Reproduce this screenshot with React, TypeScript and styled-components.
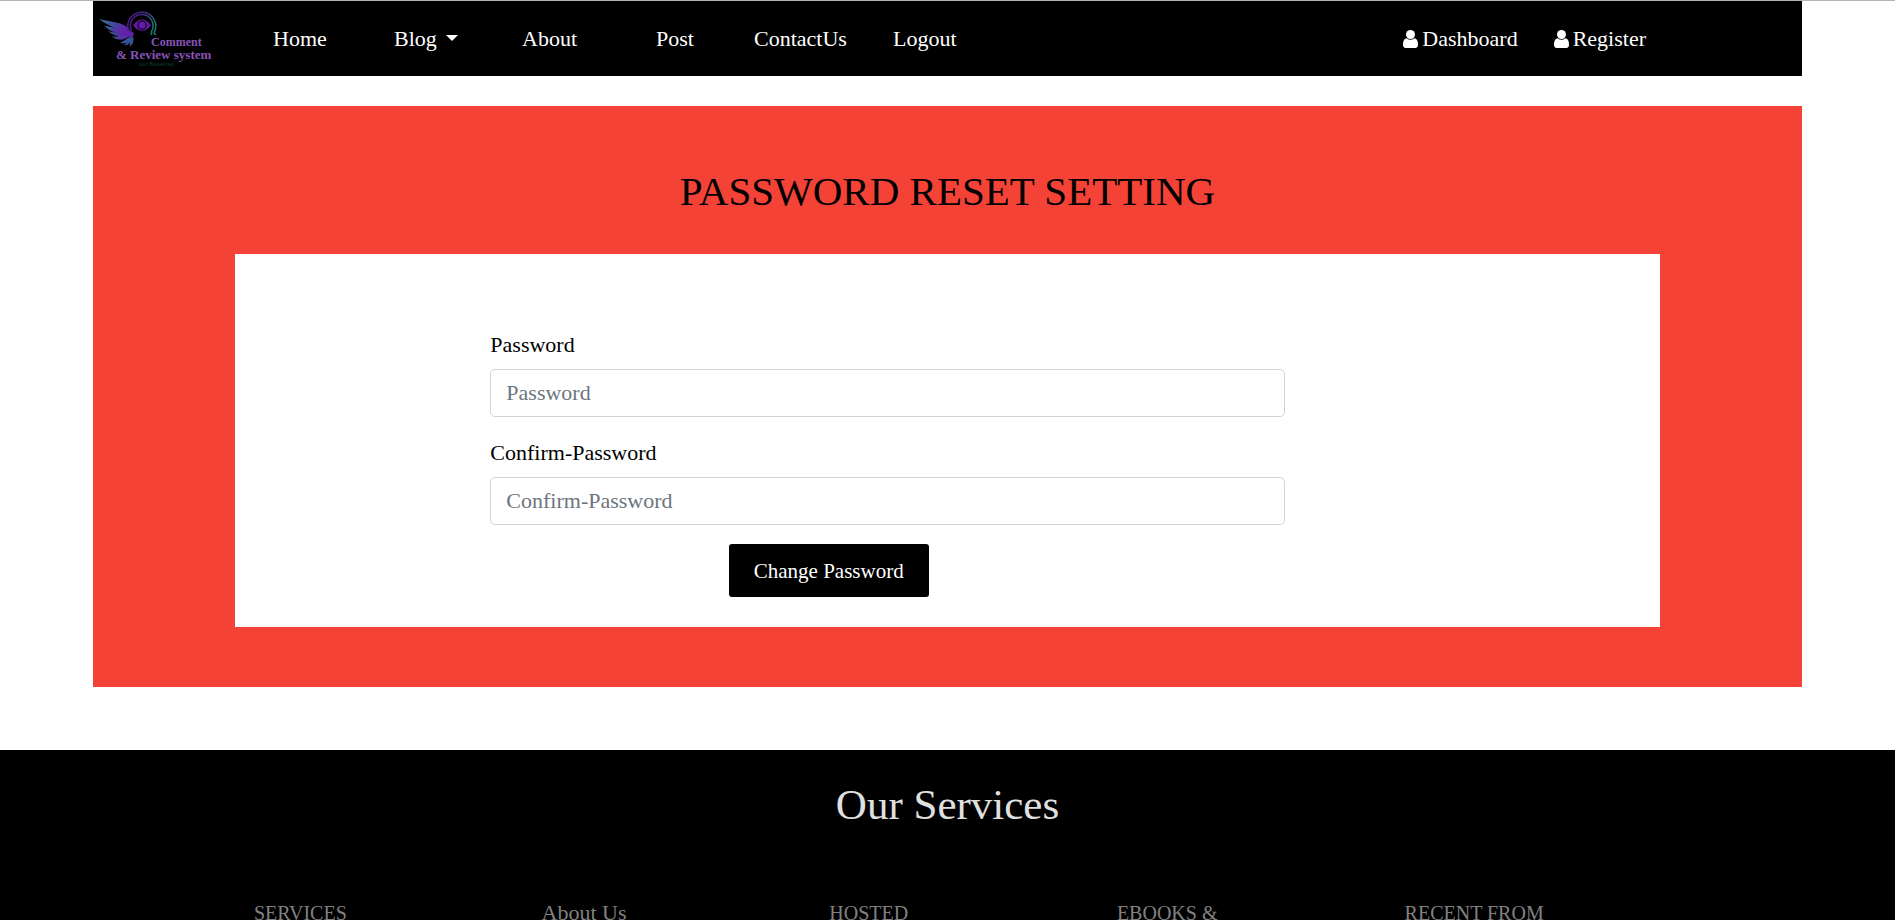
import React from "react";
import styled, { createGlobalStyle } from "styled-components";

const GlobalStyle = createGlobalStyle`
  *, *::before, *::after { box-sizing: border-box; }
  body {
    margin: 0;
    background: #fff;
    color: #000;
    font-family: "Palatino Linotype", "Book Antiqua", "Liberation Serif", serif;
    font-size: 22px;
    line-height: 30px;
  }
`;

const Page = styled.div`
  border-top: 1px solid #b4b4b4;
`;

const Container = styled.div`
  margin: 0 93px;
`;

const Navbar = styled.nav`
  display: flex;
  align-items: center;
  height: 75px;
  background: #000;
`;

const Brand = styled.a`
  display: block;
  flex: none;
  width: 180px;
  height: 75px;
`;

const NavList = styled.ul`
  display: grid;
  grid-template-columns: 121px 128px 134px 98px 139px auto;
  margin: 0;
  padding: 0;
  list-style: none;
`;

const AccountList = styled.ul`
  display: flex;
  gap: 36px;
  margin: 0 156px 0 auto;
  padding: 0;
  list-style: none;
`;

const NavLink = styled.a`
  display: flex;
  align-items: center;
  gap: 4px;
  color: #fff;
  text-decoration: none;
`;

const Caret = styled.span`
  margin: 0 0 2px 5px;
  border-top: 6px solid #fff;
  border-right: 6px solid transparent;
  border-left: 6px solid transparent;
`;

const ResetSection = styled.main`
  margin-top: 30px;
  padding: 61px 0 60px;
  background: #f44336;
`;

const Heading = styled.h1`
  margin: 0 0 39px;
  font-size: 41px;
  font-weight: 400;
  line-height: 48px;
  text-align: center;
`;

const Panel = styled.div`
  width: calc(100% * 10 / 12);
  margin: 0 auto;
  padding: 76px 0 30px;
  background: #fff;
`;

const Form = styled.form`
  margin: 0 26.3% 0 17.9%;
`;

const Field = styled.div`
  margin-bottom: 21px;
  &:last-of-type { margin-bottom: 19px; }
`;

const Label = styled.label`
  display: block;
  width: fit-content;
  margin-bottom: 9px;
`;

const Input = styled.input`
  display: block;
  width: 100%;
  height: 48px;
  padding: 0 15px;
  border: 1px solid #ced4da;
  border-radius: 5px;
  background: #fff;
  color: #495057;
  font: inherit;
  &::placeholder { color: #6c757d; opacity: 1; }
`;

const SubmitButton = styled.button`
  display: block;
  height: 53px;
  margin-left: 30%;
  padding: 0 25px;
  border: 0;
  border-radius: 3px;
  background: #000;
  color: #fff;
  font: inherit;
  font-size: 21px;
`;

const Footer = styled.footer`
  margin-top: 63px;
  padding-top: 31px;
  background: #000;
`;

const FooterHeading = styled.h2`
  margin: 0 0 69px;
  color: #e0e0e0;
  font-size: 43px;
  font-weight: 400;
  line-height: 48px;
  text-align: center;
`;

const FooterColumns = styled.div`
  display: grid;
  grid-template-columns: repeat(5, 1fr);
  padding: 0 10.7% 0 13.4%;
`;

const ColumnTitle = styled.h3<{ $caps?: boolean }>`
  margin: 0;
  color: #808080;
  font-size: ${(p) => (p.$caps ? 20 : 22)}px;
  font-weight: 400;
  line-height: 30px;
`;

const Logo = () => (
  <svg width="147" height="75" viewBox="0 0 147 75" role="img" aria-label="Comment & Review system">
    <defs>
      <linearGradient id="wing" x1="0" y1="0" x2="1" y2="0.6">
        <stop offset="0" stopColor="#2a7f86" />
        <stop offset="0.5" stopColor="#47409e" />
        <stop offset="0.85" stopColor="#6320a8" />
      </linearGradient>
      <linearGradient id="ring" x1="0" y1="0" x2="1" y2="0.5">
        <stop offset="0.2" stopColor="#4b1c8c" />
        <stop offset="0.6" stopColor="#3d3a80" />
        <stop offset="1" stopColor="#1b7a6b" />
      </linearGradient>
    </defs>
    <g fill="url(#wing)">
      <path d="M6.500 18C17 21 31 21 36 28C38 31 40 31 41 32C40 38 36 37 33 33.500C25 27 14 25 6.500 18Z" />
      <path d="M11 24.500C18 26.500 28 26 34 33.500C26 33.500 17 31 11 24.500Z" />
      <path d="M15 30C22 32.500 28 30.500 35 34.500C28 37 20 35 15 30Z" />
      <path d="M19 35.500C26 36.500 30 33.500 36 35C31 40 25 40 19 35.500Z" />
    </g>
    <g fill="#35559a">
      <path d="M27 41.500C31 41 33 37 38 35.500C37 40 32 44.500 27 41.500Z" />
      <path d="M31 44.500C34 42 35 38 39 36C39 40 36 44.500 31 44.500Z" />
      <path d="M37 45.500C36 41 38 38 40 35C41 39 40.500 43 37 45.500Z" />
    </g>
    <g fill="none" stroke="url(#ring)" strokeWidth="1.500">
      <path d="M36 31A14 14 0 1 1 61 32L63 34" />
      <path d="M38.500 29.500A11.300 11.300 0 1 1 58.500 30.500V34" />
    </g>
    <path d="M40 24.200Q49 13 58 24.200Q49 35.500 40 24.200Z" fill="#641aa8" />
    <circle cx="49" cy="24.200" r="4.600" fill="#000" />
    <circle cx="49" cy="24.200" r="3.600" fill="#641aa8" />
    <text x="46" y="65" fill="#0d3f3c" fontFamily="Liberation Sans, sans-serif" fontSize="6">our Baseline)</text>
    <text x="58" y="45" fill="#8653b8" fontFamily="Liberation Serif, serif" fontSize="12" fontWeight="700">Comment</text>
    <text x="23" y="58" fill="#8653b8" fontFamily="Liberation Serif, serif" fontSize="13" fontWeight="700">&amp; Review system</text>
  </svg>
);

const UserIcon = () => (
  <svg width="15" height="18" viewBox="256 128 1280 1536" fill="currentColor" aria-hidden="true">
    <path d="M1536 1399q0 109-62.500 187t-150.500 78h-854q-88 0-150.500-78t-62.500-187q0-85 8.500-160.500t31.500-152 58.500-131 94-89 134.500-34.500q131 128 313 128t313-128q76 0 134.500 34.500t94 89 58.500 131 31.500 152 8.500 160.500z" />
    <circle cx="896" cy="512" r="384" />
  </svg>
);

const navItems = [
  { label: "Home" },
  { label: "Blog", menu: true },
  { label: "About" },
  { label: "Post" },
  { label: "ContactUs" },
  { label: "Logout" },
];

const accountItems = ["Dashboard", "Register"];

const fields = [
  { id: "password", label: "Password" },
  { id: "confirm-password", label: "Confirm-Password" },
];

const footerColumns = [
  { title: "SERVICES", caps: true },
  { title: "About Us", caps: false },
  { title: "HOSTED", caps: true },
  { title: "EBOOKS &", caps: true },
  { title: "RECENT FROM", caps: true },
];

export default function App() {
  return (
    <>
      <GlobalStyle />
      <Page>
        <Container>
          <Navbar>
            <Brand href="#">
              <Logo />
            </Brand>
            <NavList>
              {navItems.map((item) => (
                <li key={item.label}>
                  <NavLink href="#">
                    {item.label}
                    {item.menu && <Caret />}
                  </NavLink>
                </li>
              ))}
            </NavList>
            <AccountList>
              {accountItems.map((label) => (
                <li key={label}>
                  <NavLink href="#">
                    <UserIcon />
                    {label}
                  </NavLink>
                </li>
              ))}
            </AccountList>
          </Navbar>
          <ResetSection>
            <Heading>PASSWORD RESET SETTING</Heading>
            <Panel>
              <Form onSubmit={(e) => e.preventDefault()}>
                {fields.map((field) => (
                  <Field key={field.id}>
                    <Label htmlFor={field.id}>{field.label}</Label>
                    <Input type="password" id={field.id} placeholder={field.label} />
                  </Field>
                ))}
                <SubmitButton type="submit">Change Password</SubmitButton>
              </Form>
            </Panel>
          </ResetSection>
        </Container>
        <Footer>
          <FooterHeading>Our Services</FooterHeading>
          <FooterColumns>
            {footerColumns.map((column) => (
              <ColumnTitle key={column.title} $caps={column.caps}>
                {column.title}
              </ColumnTitle>
            ))}
          </FooterColumns>
        </Footer>
      </Page>
    </>
  );
}
